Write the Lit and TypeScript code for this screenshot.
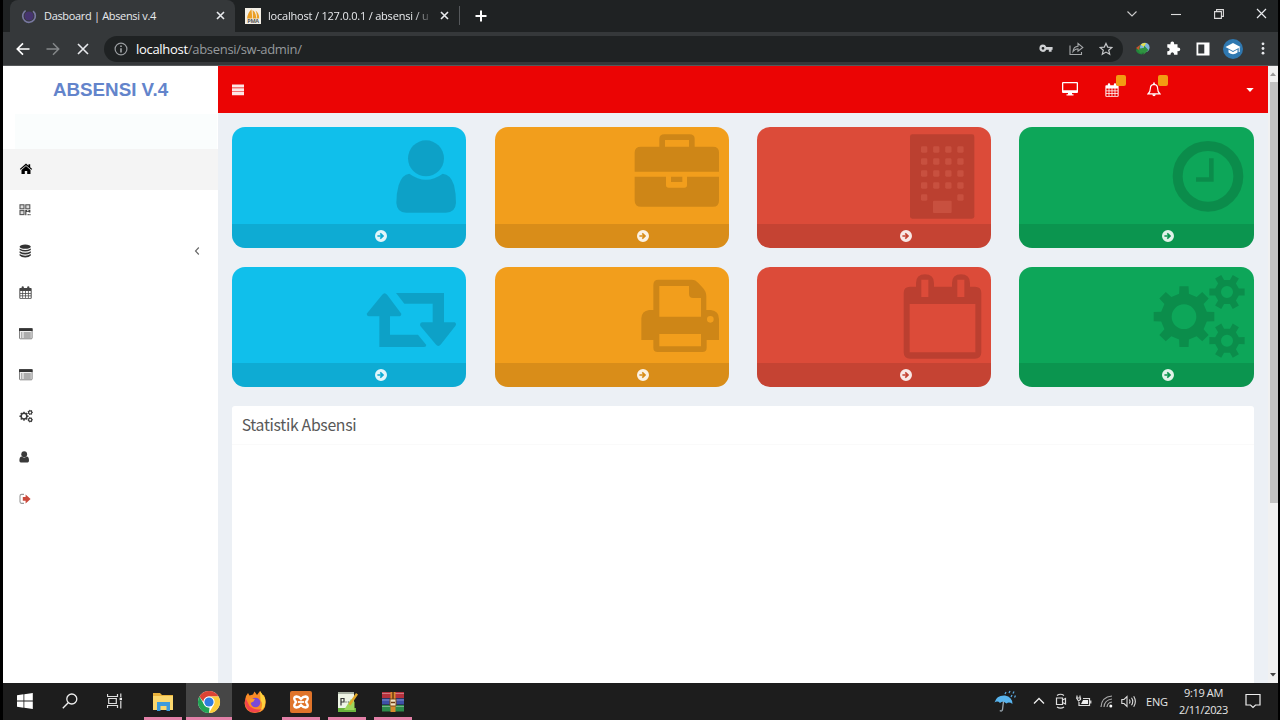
import { LitElement, html, svg, css } from "lit";
import { customElement } from "lit/decorators.js";
import { classMap } from "lit/directives/class-map.js";

/** Outline of a cog with a round hole. */
function gear(cx: number, cy: number, r: number, root: number, hole: number, teeth: number, turn = 0): string {
  const step = (Math.PI * 2) / teeth;
  const pt = (rad: number, a: number) =>
    `${(cx + rad * Math.cos(a)).toFixed(2)} ${(cy + rad * Math.sin(a)).toFixed(2)}`;
  const pts: string[] = [];
  for (let i = 0; i < teeth; i++) {
    const a = i * step + turn;
    pts.push(pt(root, a - step * 0.27), pt(r, a - step * 0.19), pt(r, a + step * 0.19), pt(root, a + step * 0.27));
  }
  return `M${pts.join("L")}ZM${cx - hole} ${cy}a${hole} ${hole} 0 1 0 ${hole * 2} 0a${hole} ${hole} 0 1 0 ${-hole * 2} 0Z`;
}

const calendarGrid = svg`
  <path fill-rule="evenodd" d="M1.2 2.2H2.8V1.4Q2.8 .3 4 .3T5.2 1.4V2.2H8.8V1.4Q8.8 .3 10 .3T11.2 1.4V2.2H12.8Q13.6 2.2 13.6 3V13Q13.6 13.8 12.8 13.8H1.2Q.4 13.8 .4 13V3Q.4 2.2 1.2 2.2ZM1.4 5.4V7.4H3.6V5.4ZM4.4 5.4V7.4H6.6V5.4ZM7.4 5.4V7.4H9.6V5.4ZM10.4 5.4V7.4H12.6V5.4ZM1.4 8.2V10.2H3.6V8.2ZM4.4 8.2V10.2H6.6V8.2ZM7.4 8.2V10.2H9.6V8.2ZM10.4 8.2V10.2H12.6V8.2ZM1.4 11V12.9H3.6V11ZM4.4 11V12.9H6.6V11ZM7.4 11V12.9H9.6V11ZM10.4 11V12.9H12.6V11Z"/>`;

const listAlt = svg`
  <rect x=".5" y="1.6" width="12.6" height="10.2" rx=".8" fill="#eee" stroke="#777" stroke-width=".9"/>
  <path d="M0 1.2H13.600V4H0Z" fill="#333"/>
  <path d="M2 6h1.400M2 8h1.400M2 10h1.400M4.600 6H11.800M4.600 8H11.800M4.600 10H11.800" stroke="#666" stroke-width=".95"/>`;

const menu = [
  { active: true, art: svg`<path fill="#000" d="M7 1.6L.8 7 1.6 7.8 7 3.2 12.4 7.8 13.2 7 11.2 5.2V2.2H9.5V3.8ZM7 4L2.5 7.9V12H5.8V9H8.2V12H11.5V7.9Z"/>` },
  { art: svg`<g fill="#ddd" stroke="#555" stroke-width="1.1"><rect x="1" y="1.8" width="4" height="4"/><rect x="6.800" y="1.8" width="4" height="4"/><rect x="1" y="7.600" width="4" height="4"/></g><path fill="#444" d="M6.2 7.100H8.2V8.2H9.4V7.100H11.4V9.600H9.8V9H7.4V12.200H6.200ZM8.600 11H9.800V12.200H8.600ZM10.400 11H11.500V12.200H10.400Z"/>` },
  { arrow: true, art: svg`<g fill="#333"><ellipse cx="6.2" cy="2.7" rx="5.6" ry="2.1"/><path d="M.6 4.4Q6.2 7.4 11.8 4.4V6Q6.2 9.2 .6 6ZM.6 7.3Q6.2 10.3 11.8 7.3V8.9Q6.2 12 .6 8.9ZM.6 10.1Q6.2 13.2 11.8 10.1V11.4Q10 13.5 6.2 13.5T.6 11.4Z"/></g>` },
  { art: svg`<g fill="#444" transform="scale(.93)">${calendarGrid}</g>` },
  { art: listAlt },
  { art: listAlt },
  { art: svg`<g fill="#3a3a3a" fill-rule="evenodd"><path d="${gear(5, 7.2, 4.6, 3.7, 2.1, 8)}"/><path d="${gear(11.2, 3.4, 2.7, 2.2, 1, 7)}"/><path d="${gear(11.2, 10.8, 2.7, 2.2, 1, 7)}"/></g>` },
  { art: svg`<g fill="#3a3a3a"><circle cx="5.2" cy="4.2" r="2.9"/><path d="M2.8 6.4Q5.2 8.4 7.6 6.4 10 6.6 10 10.4 10 12.5 8.6 12.5H1.8Q.4 12.5 .4 10.4 .4 6.6 2.8 6.4Z"/></g>` },
  { art: svg`<path d="M5 2.4H2.6Q1 2.4 1 4V9.8Q1 11.4 2.6 11.4H5" fill="none" stroke="#999" stroke-width="1.1"/><path fill="#cb4a3c" d="M3.8 5H6.600V2.4L11.600 6.9 6.600 11.4V8.8H3.8Z"/>` },
];

const cards = [
  { tone: "aqua", box: "396 22 330 288", art: svg`<circle cx="606" cy="116" r="54"/><path d="M556 162Q606 198 656 162Q680 164 690 196Q696 220 696 250Q694 279 666 279H546Q519 279 517 250Q517 220 524 196Q534 164 556 162Z"/>` },
  { tone: "amber", box: "404 22 330 288", art: svg`<path fill-rule="evenodd" d="M451 156V98Q451 81 470 81H525V58Q525 44 540 44H616Q631 44 631 58V81H686Q704 81 704 98V156ZM542 81H614V61H542Z"/><path d="M451 171H545V196Q545 204 553 204H600Q608 204 608 196V171H704V243Q704 261 686 261H470Q451 261 451 243ZM560 171H594V187H560Z"/>` },
  { tone: "brick", keys: true, box: "409 22 330 288", art: svg`<rect x="496" y="44" width="193" height="253" rx="7"/><g class="lit">${[0, 1, 2, 3, 4].map((r) => [0, 1, 2, 3].map((c) => (r === 4 && (c === 1 || c === 2) ? null : svg`<rect x="${529 + c * 36.3}" y="${80 + r * 36}" width="19" height="19" rx="4"/>`)))}<rect x="565" y="243" width="56" height="37" rx="3"/></g>` },
  { tone: "green", box: "402 22 330 288", art: svg`<circle cx="594" cy="170" r="91" fill="none" stroke="#000" stroke-width="30"/><path d="M597 116H611V186H558V173H597Z"/>` },
  { tone: "aqua", box: "396 442 330 288", art: svg`<path d="M428 582L474 526Q482 516 490 526L532 582Q532 590 524 590H498V645H582L607 676Q607 682 600 682H466V590H434Q428 588 428 582Z"/><path d="M516 520H660V608H692Q699 612 694 619L651 674Q643 684 635 674L589 619Q586 610 594 608H626V552H541Z"/>` },
  { tone: "amber", box: "404 442 330 288", art: svg`<path fill-rule="evenodd" d="M507 661H471V596Q472 574 494 571H507V496Q507 480 522 480H622Q634 480 642 490L656 505Q666 516 666 530V571H680Q704 574 704 598V661H667V684Q667 697 654 697H520Q507 697 507 684ZM525 499V591H650V535H626Q614 535 614 523V499ZM525 643V680H650V643ZM668 599a10 10 0 1 0 20 0a10 10 0 1 0 -20 0Z"/>` },
  { tone: "brick", box: "409 442 330 288", art: svg`<path fill-rule="evenodd" d="M477 520Q477 501 496 501H514V490Q514 464 541 464T568 490V501H622V490Q622 464 649 464T676 490V501H691Q710 501 710 520V698Q710 717 691 717H496Q477 717 477 698ZM495 553V698H692V553ZM530 480V532H551V480ZM638 480V532H659V480Z"/>` },
  { tone: "green", box: "402 442 330 288", art: svg`<g fill-rule="evenodd"><path d="${gear(522, 591, 92, 70, 37, 8)}"/><path d="${gear(651, 517, 54, 37, 18, 6)}"/><path d="${gear(651, 663, 54, 37, 18, 6)}"/></g>` },
];

const icon = (w: number, h: number, art: unknown) =>
  html`<svg width="${w}" height="${h}" viewBox="0 0 ${w} ${h}">${art}</svg>`;

const cross = (s: number, sw = 1.6) =>
  icon(s, s, svg`<path d="M1 1L${s - 1} ${s - 1}M${s - 1} 1L1 ${s - 1}" fill="none" stroke="#e8eaed" stroke-width="${sw}"/>`);

@customElement("browser-chrome")
class BrowserChrome extends LitElement {
  static styles = css`
    :host { display: block; height: 66px; background: #1f2223; color: #e8eaed; font-family: "Open Sans", "Noto Sans", sans-serif; }
    svg { display: block; flex: none; }
    .strip { display: flex; height: 32px; align-items: stretch; }
    .tab { display: flex; align-items: center; width: 225px; box-sizing: border-box; font-size: 11px; letter-spacing: -0.33px; white-space: nowrap; padding-bottom: 1px; }
    .tab.on { margin-left: 7px; background: #35383a; border-radius: 8px 8px 0 0; padding-left: 11px; padding-right: 10.5px; }
    .tab.off { padding-left: 10px; padding-right: 11.5px; }
    .title { flex: 1; margin-left: 7px; overflow: hidden; }
    .fade { letter-spacing: -0.2px; -webkit-mask-image: linear-gradient(90deg, #000 146px, transparent 165px); mask-image: linear-gradient(90deg, #000 146px, transparent 165px); }
    .rule { width: 1px; height: 19px; margin: 6px 14.500px 0 -1px; background: #55585b; }
    .plus { align-self: center; }
    .wins { display: flex; margin-left: auto; margin-right: -5.500px; height: 27px; }
    .win { width: 43.2px; display: grid; place-items: center; }
    .bar { display: flex; height: 33px; align-items: center; background: #35383a; border-bottom: 1px solid #56595b; }
    .nav { width: 30px; display: grid; place-items: center; }
    .navs { display: flex; padding-left: 5px; width: 96px; }
    .pill { flex: 1; display: flex; align-items: center; height: 26px; border-radius: 13px; background: #1f2223; padding-left: 10px; font-size: 13px; }
    .url { margin-left: 8px; color: #969a9d; letter-spacing: -0.3px; }
    .host { color: #fff; }
    .acts { display: flex; margin-left: auto; padding-right: 2px; }
    .exts { display: flex; padding: 0 0 0 5px; }
  `;

  render() {
    return html`
      <div class="strip">
        <div class="tab on">
          ${icon(16, 16, svg`<circle cx="8" cy="8" r="6.3" fill="none" stroke="#7878a0" stroke-width="1.7" stroke-dasharray="31 9" transform="rotate(-50 8 8)"/><circle cx="8" cy="8" r="4.6" fill="#46346f"/>`)}
          <span class="title">Dasboard | Absensi v.4</span>
          ${cross(9)}
        </div>
        <div class="tab off">
          ${icon(16, 16, svg`<rect width="16" height="16" fill="#f3efe6"/><path d="M2 10.5Q3 4 6.5 1.2L7.3 10.5ZM8 10.5L7.6 2Q11 4 11.5 10.5ZM11.8 10.5Q12.4 6 10.5 2.6 14.2 5 14.2 10.5Z" fill="#eb9f23"/><text x="8" y="15.4" text-anchor="middle" font-size="5.5" font-weight="700" fill="#555">PMA</text>`)}
          <span class="title fade">localhost / 127.0.0.1 / absensi / u</span>
          ${cross(9)}
        </div>
        <span class="rule"></span>
        <span class="plus">${icon(12, 12, svg`<path d="M6 .5V11.5M.5 6H11.5" stroke="#fff" stroke-width="2"/>`)}</span>
        <div class="wins">
          <span class="win">${icon(12, 8, svg`<path d="M1.5 1.5L6 6 10.5 1.5" fill="none" stroke="#ccc" stroke-width="1.1"/>`)}</span>
          <span class="win">${icon(10, 4, svg`<path d="M0 2.5H10" stroke="#ddd" stroke-width="1.1"/>`)}</span>
          <span class="win">${icon(10, 10, svg`<path d="M.6 2.6H7.4V9.4H.6ZM2.6 2.6V.6H9.4V7.4H7.4" fill="none" stroke="#ddd" stroke-width="1.1"/>`)}</span>
          <span class="win">${cross(11, 1.2)}</span>
        </div>
      </div>
      <div class="bar">
        <div class="navs">
          <span class="nav">${icon(14, 14, svg`<path d="M13.5 7H1.5M7 1.3L1.3 7 7 12.7" fill="none" stroke="#fff" stroke-width="1.7"/>`)}</span>
          <span class="nav">${icon(14, 14, svg`<path d="M.5 7H12.5M7 1.3L12.7 7 7 12.7" fill="none" stroke="#85888a" stroke-width="1.5"/>`)}</span>
          <span class="nav">${cross(12, 1.6)}</span>
        </div>
        <div class="pill">
          ${icon(14, 14, svg`<circle cx="7" cy="7" r="5.9" fill="none" stroke="#9a9da0" stroke-width="1.2"/><path d="M7 6.2V10.4M7 3.6V5.1" stroke="#b5b8bb" stroke-width="1.4"/>`)}
          <span class="url"><span class="host">localhost</span>/absensi/sw-admin/</span>
          <div class="acts">
            <span class="nav">${icon(14, 9, svg`<path fill="#cfd1d3" fill-rule="evenodd" d="M4 .6Q6.3 .6 7.3 3H13.6V5.7H12.6V7.7H9.8V5.7H7.3Q6.3 8 4 8 .4 7.600 .4 4.300 .4 .9 4 .6ZM4 2.9a1.400 1.400 0 1 0 0 2.800a1.400 1.400 0 1 0 0-2.800Z"/>`)}</span>
            <span class="nav">${icon(15, 15, svg`<path d="M1 4.500V13.500H12.500V11M4 10.500Q4.500 5.500 9 5.200V2.500L13.800 6.400 9 10.200V7.700Q6 7.700 4 10.500Z" fill="none" stroke="#a6a9ab" stroke-width="1.1"/>`)}</span>
            <span class="nav">${icon(14, 14, svg`<path d="M7 1.400L8.700 5.100 12.900 5.500 9.700 8.200 10.700 12.200 7 10.100 3.300 12.200 4.300 8.200 1.100 5.500 5.300 5.100Z" fill="none" stroke="#c6c8ca" stroke-width="1.2"/>`)}</span>
          </div>
        </div>
        <div class="exts">
          <span class="nav">${icon(16, 14, svg`<path d="M1 8.500Q2 3.500 7 3L10 9 7 12.500Q2 12 1 8.500Z" fill="#22863a"/><circle cx="9.800" cy="5.500" r="4.800" fill="#7fb5dc"/><path d="M5.500 2.500Q8 .5 11 1L9 5Z" fill="#e7e24c"/><path d="M3 7L9 5.800V3.600L13.500 8 8.500 12.800V10.300L5 11Z" fill="#2f9440"/><path d="M1 6L5 3 4 8Z" fill="#c9512f"/>`)}</span>
          <span class="nav">${icon(15, 15, svg`<path fill="#fff" d="M1.300 3.200H4.500Q4.200 .6 6.300 .6T8.100 3.200H11.500V6.400Q14.300 6.200 14.300 8.300T11.500 10.100V13.800H8.200Q8.200 11.200 6.300 11.200T4.500 13.800H1.300V10.300Q3.700 10.200 3.700 8.400T1.300 6.500Z"/>`)}</span>
          <span class="nav">${icon(14, 14, svg`<path fill="#fff" fill-rule="evenodd" d="M.5 .5H13.500V13.500H.5ZM2.300 2.500V11.500H8.300V2.500Z"/>`)}</span>
          <span class="nav">${icon(20, 20, svg`<circle cx="10" cy="10" r="10" fill="#2f78b0"/><path d="M10 4L17.500 8 10 12 2.500 8Z" fill="#fff"/><path d="M5.500 10.500L10 13 14.500 10.500V13.500Q10 17 5.500 13.500Z" fill="#fff"/><path d="M16.200 8.500V13" stroke="#fff"/>`)}</span>
          <span class="nav">${icon(4, 13, svg`<g fill="#e8eaed"><circle cx="2" cy="1.800" r="1.400"/><circle cx="2" cy="6.500" r="1.400"/><circle cx="2" cy="11.200" r="1.400"/></g>`)}</span>
        </div>
      </div>
    `;
  }
}

@customElement("admin-page")
class AdminPage extends LitElement {
  static styles = css`
    :host { display: flex; height: 616.5px; background: #ecf0f5; overflow: hidden; }
    svg { display: block; flex: none; }
    .side { width: 215px; background: #fff; flex: none; }
    .brand { height: 48px; display: grid; place-items: center; font: 700 18.800px/48px "Liberation Sans", Arial, sans-serif; color: #6384cb; }
    .user { height: 34.500px; background: #fafdfd; margin: 0 1px 0 12px; }
    .item { display: flex; align-items: center; height: 41.200px; padding: 0 18px 0 16px; box-sizing: border-box; justify-content: space-between; }
    .item.on { background: #f4f4f4; }
    .main { flex: 1; display: flex; flex-direction: column; }
    .head { display: flex; align-items: center; height: 47px; flex: none; background: #eb0404; padding: 0 14.500px 0 14px; margin-top: .3px; box-sizing: border-box; }
    .tools { display: flex; align-items: center; margin-left: auto; }
    .tool { position: relative; width: 42px; display: grid; place-items: center; }
    .dot { position: absolute; left: 25px; top: -7.500px; width: 10px; height: 11px; border-radius: 2px; background: #f39c12; }
    .caret { margin-left: 71px; }
    .cards { display: grid; grid-template-columns: repeat(4, 1fr); gap: 19px 28.300px; padding: 14px 14.500px 0 14.200px; }
    .card { height: 120.500px; border-radius: 13px; overflow: hidden; display: flex; flex-direction: column; }
    .body { height: 96.500px; display: flex; justify-content: flex-end; }
    .art { fill: #000; opacity: .15; }
    .foot { flex: 1; display: grid; place-items: center; background: rgba(0, 0, 0, .1); padding-left: 63px; }
    .aqua { background: #10bfeb; }
    .amber { background: #f29e1c; }
    .brick { background: #dc4b39; }
    .green { background: #0da659; }
    .lit { fill: #c8503f; }
    .keys { opacity: 1; fill: #bb4030; }
    .panel { flex: 1; margin: 18.500px 14.500px 0 14.200px; background: #fff; border-radius: 3px 3px 0 0; }
    .ptitle { height: 38px; line-height: 37px; padding-left: 9.500px; border-bottom: 1px solid #fafafa; font-family: "Noto Sans CJK JP", sans-serif; font-size: 15.800px; letter-spacing: -.32px; color: #585858; }
    .scroll { width: 10px; background: #f1f1f1; display: flex; flex-direction: column; align-items: center; justify-content: space-between; padding: 6px 0 6px; box-sizing: border-box; }
    .thumb { width: 8px; height: 421px; background: #c1c1c1; margin: 6px 0 auto 1px; }
  `;

  render() {
    return html`
      <div class="side">
        <div class="brand">ABSENSI V.4</div>
        <div class="user"></div>
        ${menu.map((m) => html`
          <div class=${classMap({ item: true, on: !!m.active })}>
            ${icon(14, 14, m.art)}
            ${m.arrow ? icon(6, 10, svg`<path d="M4.800 1.500L1.500 5 4.800 8.500" fill="none" stroke="#666" stroke-width="1.100"/>`) : null}
          </div>`)}
      </div>
      <div class="main">
        <div class="head">
          ${icon(12, 12, svg`<path fill="#fff" opacity=".9" d="M0 .5H12V3.600H0ZM0 4.300H12V7.400H0ZM0 8.100H12V11.200H0Z"/>`)}
          <div class="tools">
            <span class="tool">${icon(16, 15, svg`<path fill="#fff" fill-rule="evenodd" d="M1 0H15Q16 0 16 1V10Q16 11 15 11H10V12.200H11.500V13.400H4.500V12.200H6V11H1Q0 11 0 10V1Q0 0 1 0ZM1.300 1.300V8.300H14.700V1.300Z"/>`)}</span>
            <span class="tool">${icon(14, 14, svg`<g fill="#fff">${calendarGrid}</g>`)}<i class="dot"></i></span>
            <span class="tool">${icon(14, 15, svg`<path d="M1.200 11.800Q3.400 9.800 3.400 6.300 3.400 2.700 7 2.400 10.600 2.700 10.600 6.300 10.600 9.800 12.800 11.800Z" fill="none" stroke="#fff" stroke-width="1.200"/><path d="M6.200 .5H7.800V2.500H6.200ZM5.200 12.200H8.800Q8.500 14.300 7 14.300T5.200 12.200Z" fill="#fff"/>`)}<i class="dot"></i></span>
            <span class="caret">${icon(8, 4, svg`<path d="M.3 0H7.700L4 4Z" fill="#fff"/>`)}</span>
          </div>
        </div>
        <div class="cards">
          ${cards.map((c) => html`
            <div class="card ${c.tone}">
              <div class="body">
                <svg width="110" height="96" viewBox="${c.box}"><g class=${classMap({ art: true, keys: !!c.keys })}>${c.art}</g></svg>
              </div>
              <div class="foot">
                ${icon(12, 12, svg`<path fill="#fff" opacity=".88" fill-rule="evenodd" d="M6 0A6 6 0 1 1 6 12A6 6 0 1 1 6 0ZM2.400 5.200V6.800H6L4.700 8.100 5.800 9.200 9.200 6 5.800 2.800 4.700 3.900 6 5.200Z"/>`)}
              </div>
            </div>`)}
        </div>
        <div class="panel"><div class="ptitle">Statistik Absensi</div></div>
      </div>
      <div class="scroll">
        ${icon(6, 4, svg`<path d="M0 4H6L3 .5Z" fill="#999"/>`)}
        <div class="thumb"></div>
        ${icon(6, 4, svg`<path d="M0 0H6L3 3.500Z" fill="#444"/>`)}
      </div>
    `;
  }
}

const apps = [
  { cls: "open", art: svg`<path d="M2 3H9L11 5H22V20H2Z" fill="#e9b23c"/><path d="M2 6H22V20H2Z" fill="#fbd76d"/><path d="M6 12H19V21H15.500V16H9.500V21H6Z" fill="#3d9bdc"/>` },
  { cls: "open on", art: svg`<circle cx="12" cy="12" r="11" fill="#fff"/><path d="M2.470 6.500A11 11 0 0 1 21.530 6.500H12Q7.500 6.500 6.500 12Z" fill="#dc4335"/><path d="M2.470 6.500L7.240 14.750Q9 17.600 12.500 17.400L12 23A11 11 0 0 1 2.470 6.500Z" fill="#23a455"/><path d="M21.530 6.500A11 11 0 0 1 12 23L16.760 14.750Q18.500 10 12 6.500Z" fill="#fccd3a"/><circle cx="12" cy="12" r="5.600" fill="#fff"/><circle cx="12" cy="12" r="4.600" fill="#2f7de1"/>` },
  { cls: "", art: svg`<path d="M3 6L5 3 6.500 5.500 10 4.500 11.500 1.500 14 5 17 1 19.500 5.500 21 5 22.500 10Q24 22.500 12 23 2 22.500 1.500 13Z" fill="#fb8c26"/><path d="M17 1L22 8Q24 17 17 21.500 21 15 17.500 10Z" fill="#fdd23e"/><path d="M2.500 8Q.5 17 7 21.500 14 24.500 19 19 12 21 6.500 16Z" fill="#f2434c"/><circle cx="12.500" cy="12.500" r="4.800" fill="#7a4ad8"/><path d="M6.500 8.500L12 9 10.500 11.500 7.500 13Z" fill="#fb9a2e"/>` },
  { cls: "open", art: svg`<rect x="1" y="1" width="22" height="22" rx="2" fill="#e0742a"/><path d="M7.500 6.500Q10 6.500 12 9 14 6.500 16.500 6.500 19.500 7 18.500 9.500L17 12 18.500 14.500Q19.500 17 16.500 17.500 14 17.500 12 15 10 17.500 7.500 17.500 4.500 17 5.500 14.500L7 12 5.500 9.500Q4.500 7 7.500 6.500Z" fill="none" stroke="#fff" stroke-width="2.400"/><path d="M9 12H15" stroke="#fff" stroke-width="1.800"/>` },
  { cls: "open", art: svg`<path d="M3 2H19V22H3Z" fill="#eef5e6"/><path d="M3 18H21V22H3Z" fill="#69b43d"/><path d="M16 9L19.500 12V20H9Z" fill="#9ed65b"/><path d="M3 2H19V4H3Z" fill="#a9b2a4"/><path d="M13.500 14L21 3 23 4.500 15.500 15.500Z" fill="#dfa829"/><path d="M6 15.500V8.500H9V12H6.500M10.500 12H11.500M12.800 12H13.800" fill="none" stroke="#333" stroke-width="1.200"/>` },
  { cls: "open", art: svg`<path d="M1 2H23V8H1Z" fill="#b5313d"/><path d="M1 8.500H23V14.500H1Z" fill="#3e51a8"/><path d="M1 15H23V21.500H1Z" fill="#2c8a4a"/><path d="M1 3.500H23M1 10H23M1 16.500H23" stroke="#fff" stroke-opacity=".35"/><path d="M9.500 2H14.500V22H9.500Z" fill="#d78b2d"/><path d="M9 9H15V16H9Z" fill="#f3e4c3" stroke="#7b4a1b"/><path d="M12 2V9M10 12.500H14" stroke="#6b3a12" stroke-width="1.500"/>` },
];

@customElement("task-bar")
class TaskBar extends LitElement {
  static styles = css`
    :host { display: flex; height: 37.500px; background: #1d1d1d; color: #e6e6e6; font-family: "Open Sans", "Noto Sans", sans-serif; }
    svg { display: block; flex: none; }
    .sys { width: 45px; display: grid; place-items: center; }
    .sys:first-child { margin-left: -1px; }
    .app { width: 46px; display: flex; flex-direction: column; align-items: center; padding-top: 7px; box-sizing: border-box; }
    .sys + .app { margin-left: 3px; }
    .app.open::after { content: ""; width: 38px; height: 3px; background: #e380a8; margin-top: 3.500px; }
    .app.on { background: #464646; }
    .app.on::after { width: 46px; }
    .tray { display: flex; align-items: center; margin-left: auto; padding-right: 17px; }
    .t { width: 22.500px; display: grid; place-items: center; }
    .rain { margin-right: 11px; }
    .lang { font-size: 11px; letter-spacing: -.2px; margin-left: 6px; width: 33px; }
    .clock { width: 49px; text-align: center; font-size: 11px; line-height: 17px; letter-spacing: -.35px; white-space: nowrap; }
    .note { margin-left: 17px; }
  `;

  render() {
    return html`
      <span class="sys">${icon(16, 16, svg`<path fill="#fff" d="M0 2.300L6.500 1.300V7.500H0ZM7.300 1.200L15.800 0V7.500H7.300ZM0 8.400H6.500V14.700L0 13.700ZM7.300 8.400H15.800V16L7.300 14.800Z"/>`)}</span>
      <span class="sys">${icon(16, 16, svg`<circle cx="9.800" cy="6" r="5" fill="none" stroke="#eee" stroke-width="1.300"/><path d="M6.200 9.800L.8 15.200" stroke="#eee" stroke-width="1.400"/>`)}</span>
      <span class="sys">${icon(16, 16, svg`<path d="M.5 1V3.500H10.500V1M.5 15V12.500H10.500V15M1.700 5.500H9.300V10.500H1.700ZM13.800 .5V4M13.800 8V15.500" fill="none" stroke="#ddd" stroke-width="1.200"/><path d="M12.600 4.700H15V7.200H12.600Z" fill="#eee"/>`)}</span>
      ${apps.map((a) => html`<span class="app ${a.cls}">${icon(24, 24, a.art)}</span>`)}
      <div class="tray">
        <span class="t rain">${icon(22, 22, svg`<path d="M.5 12.500Q2.500 5 11 5.500 18.500 7 18.500 14 15 11.500 12.500 13.500 9 10.500 6 13 3.500 10.500 .5 12.500Z" fill="#58b4ee"/><path d="M9.500 11.500L8.500 19.500Q7.800 22 5.800 20.500" fill="none" stroke="#9aa7b0" stroke-width="1.300"/><path d="M12 2L11 4M16 1L15 3M20 1.500L19 3.500M18 5L17 7M21.500 5.500L20.500 7.500" stroke="#5aa6dc" stroke-width="1.300"/>`)}</span>
        <span class="t">${icon(12, 8, svg`<path d="M1 6.500L6 1.500 11 6.500" fill="none" stroke="#eee" stroke-width="1.300"/>`)}</span>
        <span class="t">${icon(12, 16, svg`<path d="M1.500 5H7.500V11.500H1.500ZM7.500 7L10.500 5.500V11L7.500 9.500M2 2.500Q5.500 0 9 2.500M2 14Q5.500 16.300 9 14" fill="none" stroke="#ddd" stroke-width="1.200"/>`)}</span>
        <span class="t">${icon(16, 12, svg`<path d="M3 7V10.500H13.500V3.500H7M14.800 5.500V8.500M1 .5V3M4 .5V3M.5 3H4.500V4.500L2.500 6Z" fill="none" stroke="#ddd" stroke-width="1.200"/><path d="M7 5H12V9H5Z" fill="#eee"/>`)}</span>
        <span class="t">${icon(13, 13, svg`<path d="M1 12Q1.500 2 12 1M4 12Q4.500 5 12 4M7 12Q7.500 7.500 12 7" fill="none" stroke="#aaa" stroke-width="1.200"/><circle cx="10.800" cy="11" r="1.500" fill="#fff"/>`)}</span>
        <span class="t">${icon(15, 13, svg`<path d="M.8 4.500H3L6 1.500V11.500L3 8.500H.8ZM8.300 4.500Q9.700 6.500 8.300 8.500M10.500 2.800Q13 6.500 10.500 10.200M12.700 1.200Q16 6.500 12.700 11.800" fill="none" stroke="#ddd" stroke-width="1.100"/>`)}</span>
        <span class="lang">ENG</span>
        <div class="clock">9:19 AM<br />2/11/2023</div>
        <span class="note">${icon(16, 16, svg`<path d="M1 1.500H15V12H10.500L8 14.500 5.500 12H1Z" fill="none" stroke="#eee" stroke-width="1.200"/>`)}</span>
      </div>
    `;
  }
}

@customElement("app-root")
class AppRoot extends LitElement {
  static styles = css`
    :host { display: block; width: 1280px; height: 720px; box-sizing: border-box; padding: 0 2px 0 3px; background: #000; overflow: hidden; }
  `;

  render() {
    return html`<browser-chrome></browser-chrome><admin-page></admin-page><task-bar></task-bar>`;
  }
}
